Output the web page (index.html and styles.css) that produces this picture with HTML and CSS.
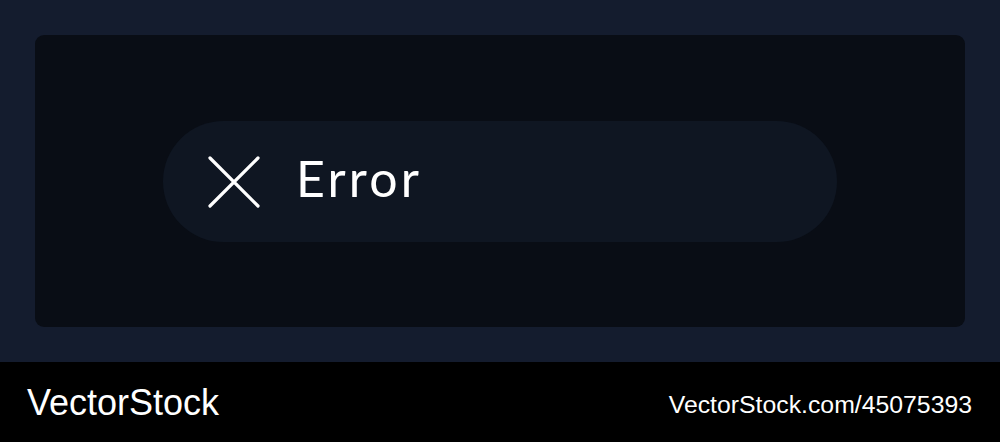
FILE: index.html
```html
<!DOCTYPE html>
<html lang="en">
<head>
  <meta charset="UTF-8" />
  <title>Error toast</title>
  <link rel="stylesheet" href="styles.css">
</head>
<body>

  <div class="stage">
    <div class="panel">
      <!-- Error notification -->
      <div class="toast">
        <svg class="toast-icon" width="52" height="52" viewBox="0 0 52 52">
          <path d="M2 2 L50 50 M50 2 L2 50" stroke="#fff" stroke-width="3.2" stroke-linecap="round" fill="none"/>
        </svg>
        <span class="toast-text">Error</span>
      </div>
    </div>
  </div>

  <div class="footer">
    <span class="brand">VectorStock</span>
    <span class="ref">VectorStock.com/45075393</span>
  </div>

</body>
</html>
```

FILE: styles.css
```css
body {
  margin: 0;
  padding: 0;
  background-color: #000;
  font-family: 'Liberation Sans', Arial, sans-serif;
}
.stage {
  height: 362px;
  box-sizing: border-box;
  padding: 35px;
  background-color: #141c2e;
}
.panel {
  height: 292px;
  background-color: #090d15;
  border-radius: 9px;
  display: flex;
  align-items: center;
  justify-content: center;
}
.toast {
  width: 674px;
  height: 121px;
  box-sizing: border-box;
  padding-left: 45px;
  border-radius: 61px;
  background-color: #0f1622;
  display: flex;
  align-items: center;
  gap: 36px;
}
.toast-icon {
  display: block;
  margin-top: 1px;
}
.toast-text {
  color: #fff;
  font-family: 'Lato', sans-serif;
  font-size: 50px;
  letter-spacing: 3.2px;
  line-height: 1;
  margin-top: -6px;
}
.footer {
  height: 80px;
  display: flex;
  align-items: center;
  justify-content: space-between;
  padding: 0 28px 0 27px;
  color: #fff;
}
.brand {
  font-size: 36px;
  margin-top: 2px;
}
.ref {
  font-size: 24.8px;
  margin-top: 5px;
}
```
